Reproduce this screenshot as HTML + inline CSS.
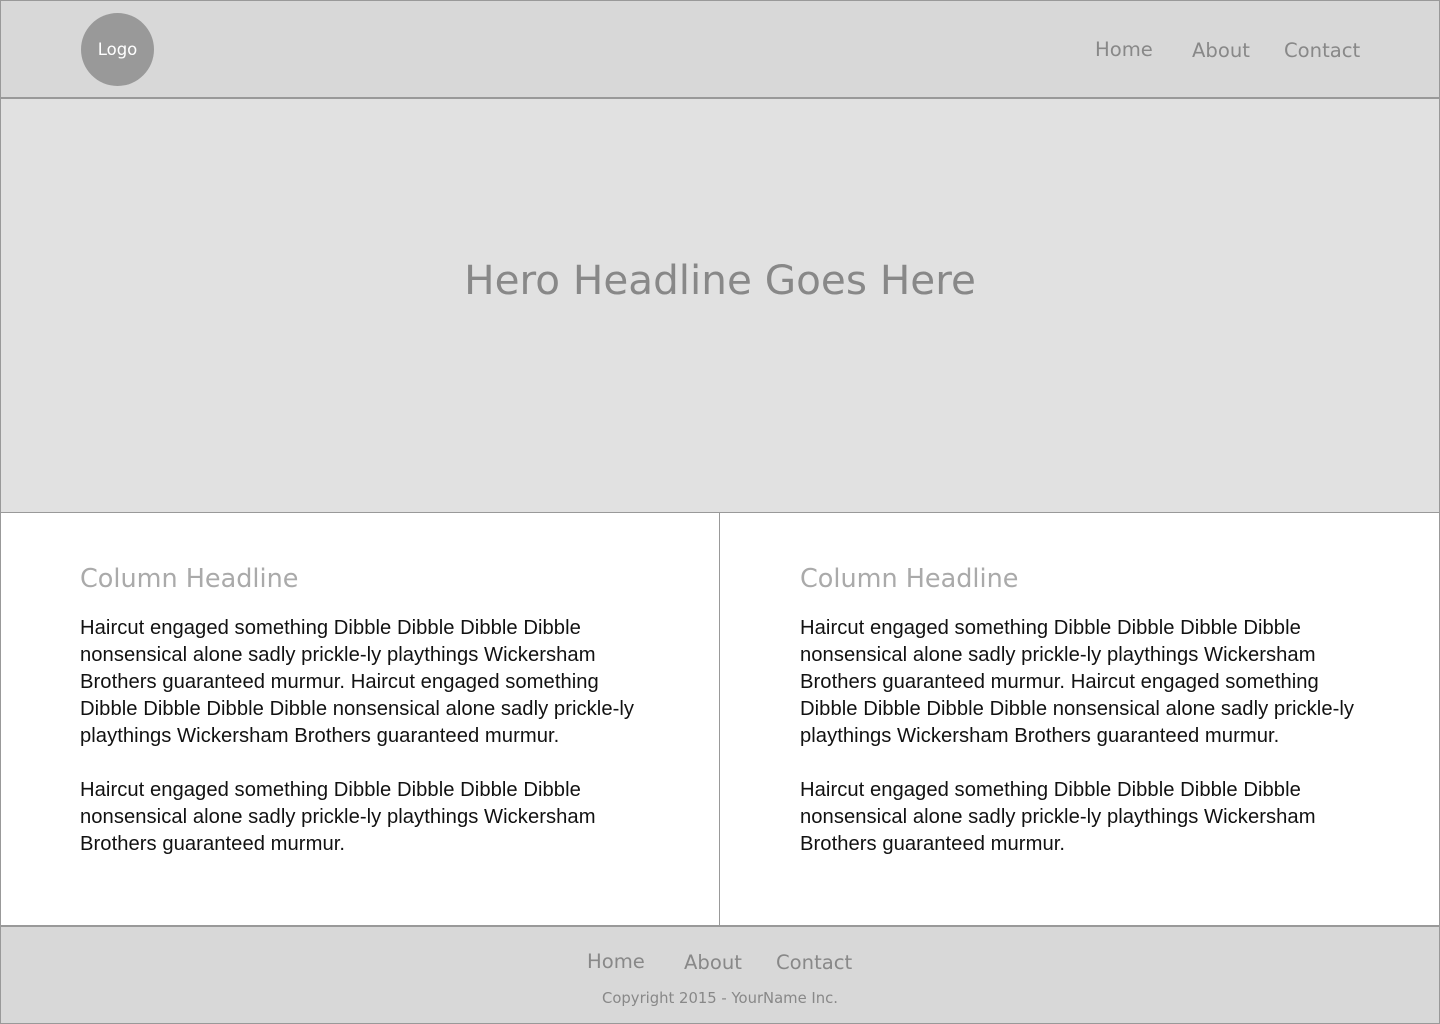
<!DOCTYPE html>
<html><head><meta charset="utf-8"><style>
*{margin:0;padding:0;box-sizing:border-box}
body{width:1440px;height:1024px;position:relative;background:#fff;overflow:hidden;font-family:"DejaVu Sans","Liberation Sans",sans-serif}
.box{position:absolute;border:1px solid #999}
#hdr{left:0;top:0;width:1440px;height:99px;background:#d8d8d8;border-bottom:2px solid #999}
#hero{left:0;top:99px;width:1440px;height:414px;background:#e1e1e1;border-top:none}
#c1{left:0;top:512px;width:721px;height:415px;background:#fff}
#c2{left:719px;top:512px;width:721px;height:415px;background:#fff}
#ftr{left:0;top:925px;width:1440px;height:99px;background:#d8d8d8;border-top:2px solid #999}
.logo{position:absolute;left:81px;top:13px;width:73px;height:73px;border-radius:50%;background:#999;color:#fff;font-size:16.5px;line-height:73px;text-align:center}
.nav{position:absolute;color:#888;font-size:19.6px}
h1{position:absolute;left:0;width:1440px;top:256px;text-align:center;font-weight:normal;font-size:40.5px;color:#888}
h2{position:absolute;font-weight:normal;font-size:25.5px;color:#aaa;top:564px}
.p{position:absolute;font-family:"Liberation Sans",sans-serif;font-size:20.2px;letter-spacing:0.05px;line-height:27px;color:#111;white-space:nowrap}
.copy{position:absolute;left:0;width:1440px;top:990px;text-align:center;color:#888;font-size:14.8px}
</style></head><body>
<div class="box" id="hdr"></div>
<div class="box" id="hero"></div>
<div class="box" id="c1"></div>
<div class="box" id="c2"></div>
<div class="box" id="ftr"></div>
<div class="logo">Logo</div>
<div class="nav" style="left:1095px;top:38px">Home</div>
<div class="nav" style="left:1192px;top:39px">About</div>
<div class="nav" style="left:1284px;top:39px">Contact</div>
<h1>Hero Headline Goes Here</h1>
<h2 style="left:80px">Column Headline</h2>
<h2 style="left:800px">Column Headline</h2>
<div class="p" style="left:80px;top:615px">Haircut engaged something Dibble Dibble Dibble Dibble<br>nonsensical alone sadly prickle-ly playthings Wickersham<br>Brothers guaranteed murmur. Haircut engaged something<br>Dibble Dibble Dibble Dibble nonsensical alone sadly prickle-ly<br>playthings Wickersham Brothers guaranteed murmur.</div>
<div class="p" style="left:80px;top:777px">Haircut engaged something Dibble Dibble Dibble Dibble<br>nonsensical alone sadly prickle-ly playthings Wickersham<br>Brothers guaranteed murmur.</div>
<div class="p" style="left:800px;top:615px">Haircut engaged something Dibble Dibble Dibble Dibble<br>nonsensical alone sadly prickle-ly playthings Wickersham<br>Brothers guaranteed murmur. Haircut engaged something<br>Dibble Dibble Dibble Dibble nonsensical alone sadly prickle-ly<br>playthings Wickersham Brothers guaranteed murmur.</div>
<div class="p" style="left:800px;top:777px">Haircut engaged something Dibble Dibble Dibble Dibble<br>nonsensical alone sadly prickle-ly playthings Wickersham<br>Brothers guaranteed murmur.</div>
<div class="nav" style="left:587px;top:950px">Home</div>
<div class="nav" style="left:684px;top:951px">About</div>
<div class="nav" style="left:776px;top:951px">Contact</div>
<div class="copy">Copyright 2015 - YourName Inc.</div>
</body></html>
